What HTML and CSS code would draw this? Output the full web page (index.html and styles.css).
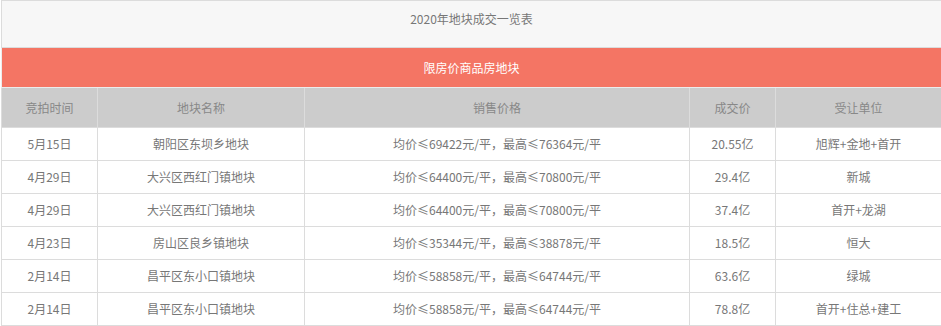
FILE: index.html
```html
<!DOCTYPE html>
<html lang="zh-CN">
<head>
<meta charset="utf-8">
<title>2020年地块成交一览表</title>
<link rel="stylesheet" href="styles.css">
</head>
<body>
<table class="deals">
  <colgroup>
    <col class="c-date">
    <col class="c-name">
    <col class="c-price">
    <col class="c-total">
    <col class="c-buyer">
  </colgroup>
  <tr class="title-row"><td colspan="5">2020年地块成交一览表</td></tr>
  <tr class="group-row"><td colspan="5">限房价商品房地块</td></tr>
  <tr class="head-row">
    <th>竞拍时间</th><th>地块名称</th><th>销售价格</th><th>成交价</th><th>受让单位</th>
  </tr>
  <tr><td>5月15日</td><td>朝阳区东坝乡地块</td><td>均价≤69422元/平，最高≤76364元/平</td><td>20.55亿</td><td>旭辉+金地+首开</td></tr>
  <tr><td>4月29日</td><td>大兴区西红门镇地块</td><td>均价≤64400元/平，最高≤70800元/平</td><td>29.4亿</td><td>新城</td></tr>
  <tr><td>4月29日</td><td>大兴区西红门镇地块</td><td>均价≤64400元/平，最高≤70800元/平</td><td>37.4亿</td><td>首开+龙湖</td></tr>
  <tr><td>4月23日</td><td>房山区良乡镇地块</td><td>均价≤35344元/平，最高≤38878元/平</td><td>18.5亿</td><td>恒大</td></tr>
  <tr><td>2月14日</td><td>昌平区东小口镇地块</td><td>均价≤58858元/平，最高≤64744元/平</td><td>63.6亿</td><td>绿城</td></tr>
  <tr><td>2月14日</td><td>昌平区东小口镇地块</td><td>均价≤58858元/平，最高≤64744元/平</td><td>78.8亿</td><td>首开+住总+建工</td></tr>
</table>
</body>
</html>
```

FILE: styles.css
```css
html, body {
  margin: 0;
  padding: 0;
  background: #fff;
}
body {
  font-family: "Noto Sans CJK SC", "Liberation Sans", sans-serif;
  font-size: 12px;
  color: #777;
}
.deals {
  margin-left: 1px;
  width: 940px;
  border-collapse: collapse;
  table-layout: fixed;
}
.c-date { width: 96px; }
.c-name { width: 207px; }
.c-price { width: 385px; }
.c-total { width: 86px; }
.c-buyer { width: 166px; }
.deals td, .deals th {
  border: 1px solid #dcdcdc;
  text-align: center;
  padding: 0;
  height: 32px;
  line-height: 14px;
  font-weight: normal;
  white-space: nowrap;
}
.title-row td {
  height: 35px;
  padding-top: 11px;
  vertical-align: top;
  background: #f7f7f7;
  color: #777;
}
.group-row td {
  height: 39px;
  background: #f47564;
  color: #fff;
  border-color: #ececec;
}
.head-row th {
  height: 39px;
  background: #cccccc;
  color: #888;
}
```
